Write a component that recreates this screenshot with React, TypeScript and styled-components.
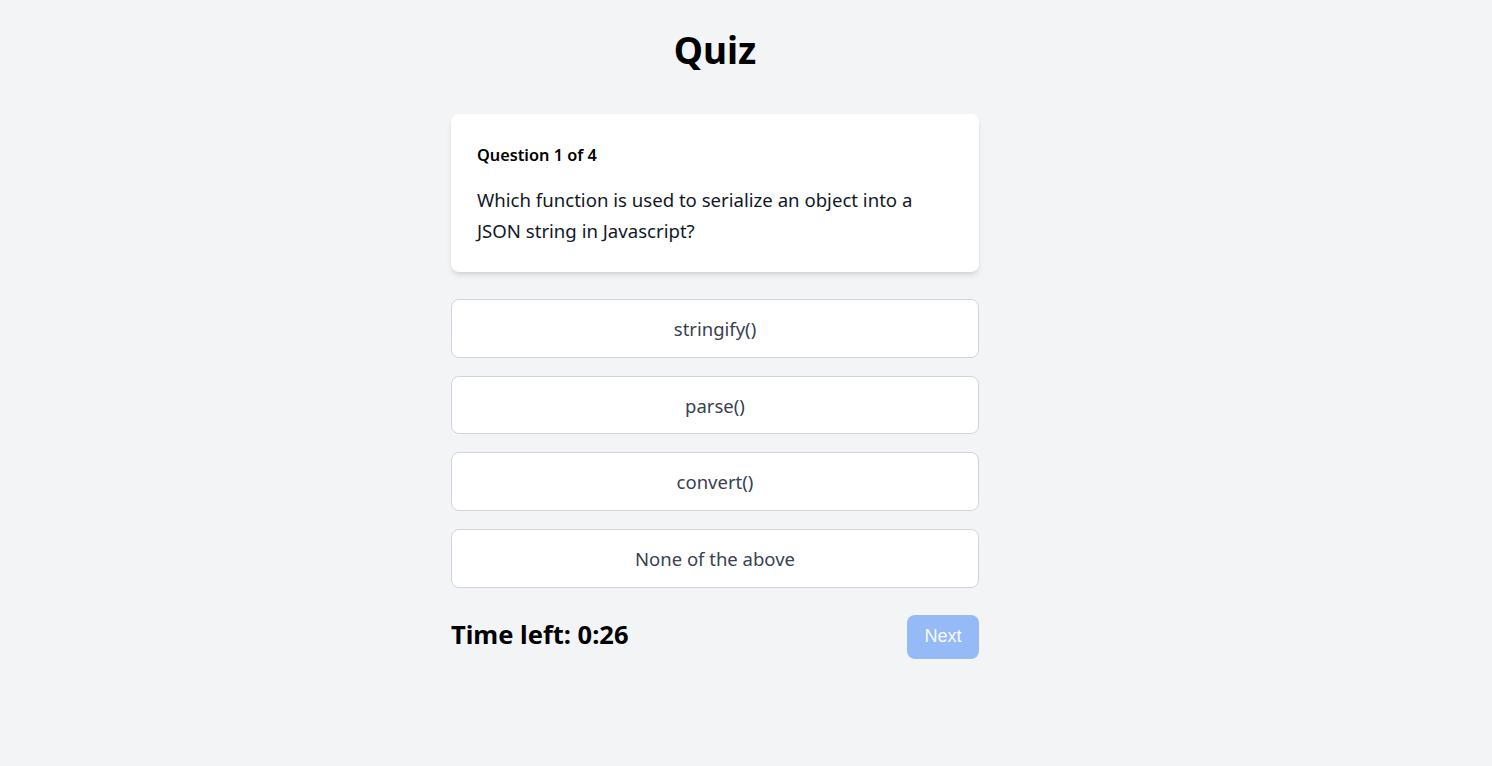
import React from "react";
import styled, { createGlobalStyle } from "styled-components";

const Global = createGlobalStyle`
  html, body { margin: 0; padding: 0; background: #f3f4f6; }
  body { font-family: "Noto Sans", "Open Sans", sans-serif; color: #111827; }
  * { box-sizing: border-box; }
`;

const Page = styled.div`
  min-height: 766px;
  padding: 22px 62px 0 0;
  display: flex;
  flex-direction: column;
  align-items: center;
`;

const Title = styled.h1`
  margin: 0 0 36px;
  font-size: 37px;
  line-height: 56px;
  font-weight: 700;
  color: #000;
`;

const Column = styled.div`
  width: 528px;
  display: flex;
  flex-direction: column;
`;

const Card = styled.div`
  background: #fff;
  border-radius: 8px;
  box-shadow: 0 4px 6px -1px rgba(0, 0, 0, 0.1), 0 2px 4px -2px rgba(0, 0, 0, 0.1);
  padding: 29px 26px 26px;
  margin-bottom: 27px;
`;

const Counter = styled.div`
  font-size: 16.3px;
  font-weight: 600;
  line-height: 24px;
  color: #000;
  margin-bottom: 17px;
`;

const QuestionText = styled.p`
  margin: 0;
  font-size: 18.6px;
  line-height: 31px;
  color: #111827;
`;

const Options = styled.div`
  display: flex;
  flex-direction: column;
  gap: 18px;
`;

const Option = styled.button`
  height: 58.7px;
  width: 100%;
  background: #fff;
  border: 1px solid #d1d5db;
  border-radius: 8px;
  font-family: "Noto Sans", "Open Sans", sans-serif;
  font-size: 18.5px;
  color: #374151;
  cursor: pointer;
`;

const Footer = styled.div`
  margin-top: 27px;
  display: flex;
  justify-content: space-between;
  align-items: flex-start;
`;

const Timer = styled.div`
  font-size: 25.5px;
  font-weight: 700;
  line-height: 36px;
  color: #000;
  margin-top: 1px;
`;

const NextButton = styled.button`
  width: 72px;
  height: 44px;
  border: none;
  border-radius: 8px;
  background: #3b82f6;
  opacity: 0.5;
  color: #fff;
  font-family: "Liberation Sans", Arial, sans-serif;
  font-size: 18px;
  cursor: not-allowed;
`;

const options = ["stringify()", "parse()", "convert()", "None of the above"];

export default function App() {
  return (
    <>
      <Global />
      <Page>
        <Title>Quiz</Title>
        <Column>
          <Card>
            <Counter>Question 1 of 4</Counter>
            <QuestionText>
              Which function is used to serialize an object into a JSON string in Javascript?
            </QuestionText>
          </Card>
          <Options>
            {options.map((o) => (
              <Option key={o}>{o}</Option>
            ))}
          </Options>
          <Footer>
            <Timer>Time left: 0:26</Timer>
            <NextButton disabled>Next</NextButton>
          </Footer>
        </Column>
      </Page>
    </>
  );
}
